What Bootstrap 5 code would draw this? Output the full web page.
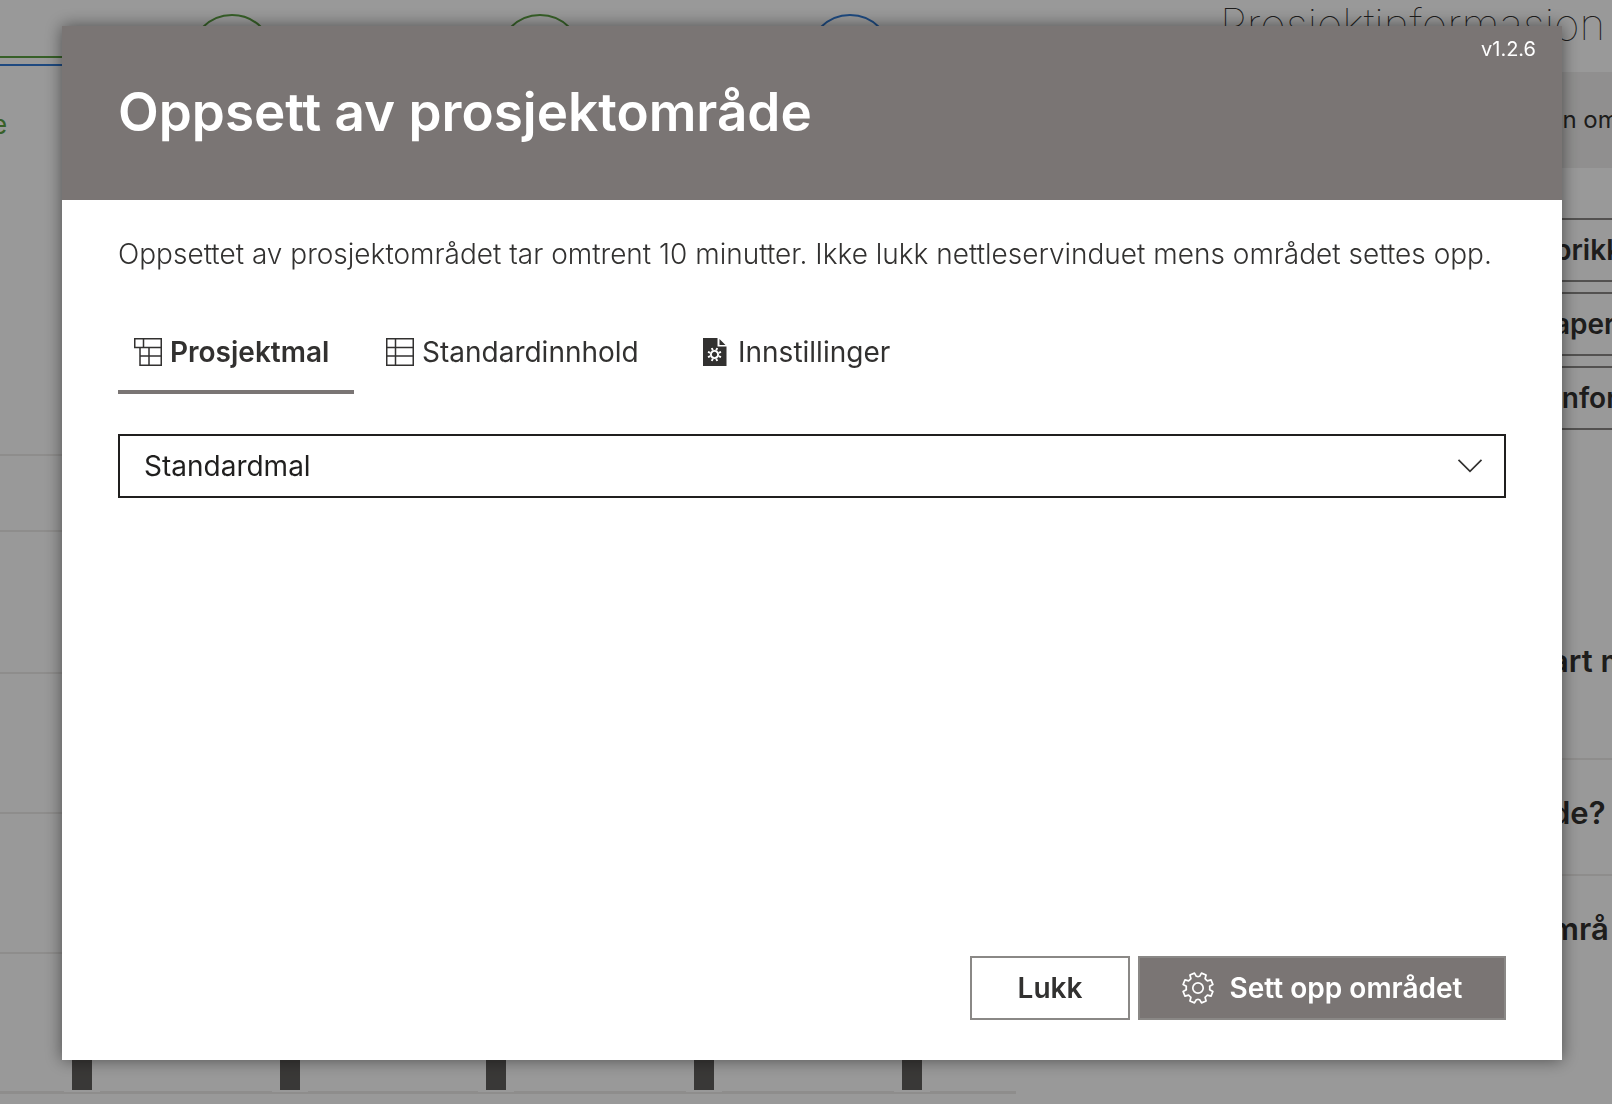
<!DOCTYPE html>
<html lang="nb">
<head>
<meta charset="utf-8">
<meta name="viewport" content="width=device-width, initial-scale=1">
<title>Oppsett av prosjektområde</title>
<link rel="stylesheet" href="https://cdn.jsdelivr.net/npm/bootstrap@5.3.0/dist/css/bootstrap.min.css">
<style>
  :root { --theme: #7a7574; --ink: #323130; --line: #edebe9; }
  body { font-family: Inter, "Liberation Sans", sans-serif; color: var(--ink); font-size: 28px; line-height: 40px; }

  /* Page behind the dialog */
  .site-page { height: 100vh; }
  .phase-area { width: 1016px; }
  .side-panel { width: 392px; white-space: nowrap; }
  .side-title { font-size: 44px; font-weight: 100; line-height: 48px; height: 72px; }
  .side-notice { height: 96px; background: #f0efee; font-size: 24px; padding-left: 328px; margin-bottom: 50px; }
  .side-btn { height: 64px; border: 2px solid #8a8886; border-right: 0; background: #fff; color: var(--ink); font-weight: 600; padding: 0 0 0 332px; margin-bottom: 10px; text-align: left; }
  .side-news { font-size: 31px; font-weight: 600; padding: 33px 0 0 331px; border-bottom: 2px solid var(--line); height: 116px; }
  .side-news.first { height: 320px; padding-top: 201px; }

  /* Dialog */
  .shade { background: rgba(0,0,0,.4); padding: 26px 50px 44px 62px; }
  .setup-dialog { background: #fff; box-shadow: 0 0 16px rgba(0,0,0,.5); }
  .setup-head { background: var(--theme); height: 174px; padding: 12px 26px 0 56px; color: #fff; }
  .setup-title { font-size: 53px; font-weight: 600; line-height: 64px; margin: 20px 0 0; }
  .setup-version { font-size: 20px; line-height: 22px; }
  .setup-body { padding: 34px 56px 40px; }
  .setup-intro { font-weight: 300; margin-bottom: 36px; }
  .setup-tabs { gap: 16px; margin-bottom: 40px; }
  .setup-tabs .nav-link { height: 84px; padding: 0 16px; gap: 8px; color: var(--ink); background: none; border: 0; border-radius: 0; border-top: 4px solid transparent; border-bottom: 4px solid transparent; }
  .setup-tabs .nav-link.active { font-weight: 600; border-bottom-color: var(--theme); }
  .tab-a { min-width: 236px; }
  .tab-b { min-width: 300px; }
  .select-wrap { position: relative; }
  .select-wrap select { appearance: none; background: #fff; border: 2px solid #201f1e; border-radius: 0; height: 64px; padding: 0 64px 0 24px; color: #201f1e; font-size: 28px; line-height: 40px; }
  .select-wrap svg { position: absolute; right: 23px; top: 24px; pointer-events: none; }
  .setup-actions { gap: 8px; }
  .setup-actions .btn { height: 64px; border: 2px solid #8a8886; border-radius: 0; font-size: 28px; font-weight: 600; line-height: 40px; padding: 0; color: var(--ink); }
  .act-close { width: 160px; background: #fff; }
  .setup-actions .act-start { width: 368px; gap: 16px; background: var(--theme); color: #fff; }
</style>
</head>
<body class="overflow-hidden">

<div class="site-page d-flex justify-content-between overflow-hidden">
  <div class="phase-area flex-shrink-0">
    <svg class="d-block" width="1016" height="1104" fill="none" aria-hidden="true">
      <g stroke-width="2">
        <path d="M0 57H190" stroke="#5ca043"/>
        <path d="M0 65H190" stroke="#327bd5"/>
        <circle cx="232" cy="56" r="41" stroke="#5ca043"/>
        <circle cx="540" cy="56" r="41" stroke="#5ca043"/>
        <circle cx="850" cy="56" r="41" stroke="#327bd5"/>
        <path d="M0 455H1016M0 531H1016M0 673H1016M0 813H1016M0 953H1016" stroke="#edebe9"/>
      </g>
      <text x="-8" y="134" font-size="26" fill="#5ca043">e</text>
      <path d="M0 1092.500H1016" stroke="#edebe9" stroke-width="3"/>
      <path d="M64 1091h36M272 1091h36M478 1091h36M686 1091h36M894 1091h36" stroke="#fff" stroke-width="2"/>
      <path d="M72 1000h20v90h-20zM280 1000h20v90h-20zM486 1000h20v90h-20zM694 1000h20v90h-20zM902 1000h20v90h-20z" fill="#605e5c"/>
    </svg>
  </div>
  <aside class="side-panel d-flex flex-column flex-shrink-0">
    <h2 class="side-title m-0">Prosjektinformasjon</h2>
    <div class="side-notice d-flex align-items-center">on om</div>
    <button class="side-btn" type="button">brikk</button>
    <button class="side-btn" type="button">aper</button>
    <button class="side-btn" type="button">Infor</button>
    <div class="side-news first">art m</div>
    <div class="side-news">de?</div>
    <div class="side-news border-0">mrå</div>
  </aside>
</div>

<div class="shade modal d-flex" role="dialog" aria-modal="true" aria-labelledby="setupTitle">
  <div class="setup-dialog d-flex flex-column flex-fill">
    <header class="setup-head">
      <div class="setup-version text-end">v1.2.6</div>
      <h1 class="setup-title" id="setupTitle">Oppsett av prosjektområde</h1>
    </header>
    <div class="setup-body d-flex flex-column flex-fill">
      <p class="setup-intro">Oppsettet av prosjektområdet tar omtrent 10 minutter. Ikke lukk nettleservinduet mens området settes opp.</p>
      <div class="setup-tabs nav" role="tablist">
        <button class="nav-link active tab-a d-flex align-items-center" type="button" role="tab" aria-selected="true">
          <svg width="28" height="28" fill="none" stroke="#323130" stroke-width="1.500" aria-hidden="true"><path d="M.75.75h26.500v26.500H6V9.500H.75zM.75 9.500h26.500M9.500.75V9.500M15 9.500v17.750M6 18h21.250"/></svg>
          Prosjektmal
        </button>
        <button class="nav-link tab-b d-flex align-items-center" type="button" role="tab" aria-selected="false">
          <svg width="28" height="28" fill="none" stroke="#323130" stroke-width="1.500" aria-hidden="true"><path d="M.75.75h26.500v26.500H.75zM.75 9.500h26.500M.75 18h26.500M9.500.75v26.500"/></svg>
          Standardinnhold
        </button>
        <button class="nav-link d-flex align-items-center" type="button" role="tab" aria-selected="false">
          <svg width="28" height="28" aria-hidden="true">
            <path d="M1 0h14.500v8.500H24.500V28H1zM17.500 1l6 6h-6z" fill="#323130"/>
            <g transform="translate(12.500 16.500)" stroke="#fff" fill="none"><circle r="3.600" stroke-width="1.900"/><path stroke-width="1.900" d="M1.700-4.100l1-2.400M4.100-1.700l2.400-1M4.100 1.700l2.400 1M1.700 4.100l1 2.400M-1.700 4.100l-1 2.400M-4.100 1.700l-2.400 1M-4.100-1.700l-2.400-1M-1.700-4.100l-1-2.400"/></g>
          </svg>
          Innstillinger
        </button>
      </div>
      <div class="select-wrap">
        <select class="form-select" aria-label="Prosjektmal"><option>Standardmal</option></select>
        <svg width="26" height="16" fill="none" stroke="#323130" stroke-width="1.700" aria-hidden="true"><path d="M1.500 1.800L13 13.300 24.500 1.800"/></svg>
      </div>
      <div class="setup-actions d-flex justify-content-end mt-auto">
        <button class="btn act-close" type="button">Lukk</button>
        <button class="btn act-start d-flex align-items-center justify-content-center" type="button">
          <svg width="32" height="32" viewBox="-16 -16 32 32" fill="none" stroke="#fff" stroke-width="1.700" stroke-linejoin="round" aria-hidden="true"><path d="M1.640-11.690L3.500-14.900 8.100-13 7.100-9.420Q8.200-8.200 9.420-7.100L13-8.100 14.900-3.500 11.690-1.640Q11.900 0 11.690 1.640L14.900 3.500 13 8.100 9.420 7.100Q8.200 8.200 7.100 9.420L8.100 13 3.500 14.900 1.640 11.690Q0 11.200-1.640 11.690L-3.500 14.900-8.100 13-7.100 9.420Q-8.200 8.200-9.420 7.100L-13 8.100-14.900 3.500-11.690 1.640Q-11.900 0-11.690-1.640L-14.900-3.500-13-8.100-9.420-7.100Q-8.200-8.200-7.100-9.420L-8.100-13-3.500-14.900-1.640-11.690Q0-11.200 1.640-11.690z"/><circle r="5.200"/></svg>
          Sett opp området
        </button>
      </div>
    </div>
  </div>
</div>

<script src="https://cdn.jsdelivr.net/npm/bootstrap@5.3.0/dist/js/bootstrap.bundle.min.js"></script>
</body>
</html>
